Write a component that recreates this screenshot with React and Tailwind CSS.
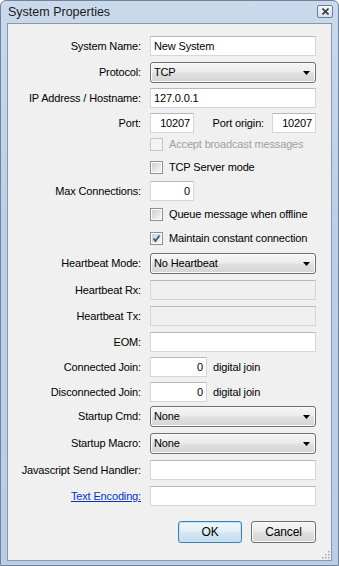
import React from "react";

const font = { fontFamily: '"Liberation Sans", Arial, sans-serif' };

function Label({ children, link }) {
  return (
    <div className="w-[133px] shrink-0 text-right">
      {link ? (
        <span className="text-[#0033cc] underline">{children}</span>
      ) : (
        children
      )}
    </div>
  );
}

function TextBox({ value = "", right, disabled, width }) {
  return (
    <div
      className={`h-[20px] border border-[#d3d6db] border-t-[#b6bac0] flex items-center px-[3px] ${
        disabled ? "bg-[#f0f0f0]" : "bg-white"
      } ${right ? "justify-end" : ""} ${width || "w-[166px]"}`}
    >
      {value}
    </div>
  );
}

function Combo({ value }) {
  return (
    <div className="w-[166px] h-[21px] rounded-[3px] border border-[#707070] bg-[linear-gradient(to_bottom,#f6f6f6_0%,#ececec_45%,#dfdfdf_55%,#d4d4d4_100%)] flex items-center justify-between pl-[3px] pr-[5px] shadow-[inset_0_0_0_1px_#fafafa]">
      <span>{value}</span>
      <svg width="7" height="4" viewBox="0 0 7 4">
        <path d="M0 0h7L3.5 4z" fill="#000" />
      </svg>
    </div>
  );
}

function Check({ checked, disabled }) {
  return (
    <div
      className={`w-[13px] h-[13px] border ${
        disabled ? "border-[#c6c6c6] bg-[#f4f4f4]" : "border-[#8e8f8f] bg-white"
      } p-[1px]`}
    >
      <div
        className={`w-full h-full flex items-center justify-center ${
          disabled
            ? "bg-[#f4f4f4]"
            : "bg-[linear-gradient(135deg,#cbcfd5_0%,#f6f6f6_100%)]"
        }`}
      >
        {checked && (
          <svg width="9" height="9" viewBox="0 0 9 9">
            <path d="M1.5 4.5l2 2.5 4-5.5" stroke="#3d5a8a" strokeWidth="1.8" fill="none" />
          </svg>
        )}
      </div>
    </div>
  );
}

function Row({ label, link, children, className = "" }) {
  return (
    <div className={`flex items-center gap-[9px] ${className}`}>
      <Label link={link}>{label}</Label>
      {children}
    </div>
  );
}

function CheckRow({ label, checked, disabled, className = "" }) {
  return (
    <div className={`flex items-center h-[13px] pl-[142px] ${className}`}>
      <Check checked={checked} disabled={disabled} />
      <span className={`ml-[6px] ${disabled ? "text-[#a0a0a0]" : ""}`}>{label}</span>
    </div>
  );
}

export default function App() {
  return (
    <div
      className="w-[339px] h-[566px] border border-[#6f849c] rounded-t-[6px] bg-[linear-gradient(to_bottom,#cad9ec_0%,#bccfe6_40%,#b9cde5_100%)] flex flex-col text-[11px] tracking-[-0.15px] text-black"
      style={font}
    >
      {/* Title bar */}
      <div className="h-[22px] flex items-center justify-between pl-[7px] pr-[5px]">
        <span className="text-[12.5px] tracking-normal text-[#1b1b1b]">System Properties</span>
        <div className="w-[16px] h-[13px] mt-[-1px] rounded-[2px] border border-[#6c7e94] bg-[linear-gradient(to_bottom,#f3f6fa,#d8e0ea)] flex items-center justify-center">
          <svg width="7" height="7" viewBox="0 0 7 7">
            <path d="M0.5 0.5l6 6M6.5 0.5l-6 6" stroke="#3a3a3a" strokeWidth="1.6" />
          </svg>
        </div>
      </div>

      {/* Client area */}
      <div className="flex-1 mx-[6px] mb-[4px] border border-[#8598ae] bg-[#f0f0f0] flex flex-col pt-[12px] relative">
        <Row label="System Name:">
          <TextBox value="New System" />
        </Row>
        <Row label="Protocol:" className="mt-[6px]">
          <Combo value="TCP" />
        </Row>
        <Row label="IP Address / Hostname:" className="mt-[5px]">
          <TextBox value="127.0.0.1" />
        </Row>
        <Row label="Port:" className="mt-[5px]">
          <div className="w-[166px] flex items-center">
            <TextBox value="10207" right width="w-[44px]" />
            <span className="flex-1 text-right pr-[8px]">Port origin:</span>
            <TextBox value="10207" right width="w-[44px]" />
          </div>
        </Row>
        <CheckRow label="Accept broadcast messages" disabled className="mt-[5px]" />
        <CheckRow label="TCP Server mode" className="mt-[10px]" />
        <Row label="Max Connections:" className="mt-[7px]">
          <TextBox value="0" right width="w-[44px]" />
        </Row>
        <CheckRow label="Queue message when offline" className="mt-[7px]" />
        <CheckRow label="Maintain constant connection" checked className="mt-[11px]" />
        <Row label="Heartbeat Mode:" className="mt-[8px]">
          <Combo value="No Heartbeat" />
        </Row>
        <Row label="Heartbeat Rx:" className="mt-[6px]">
          <TextBox disabled />
        </Row>
        <Row label="Heartbeat Tx:" className="mt-[6px]">
          <TextBox disabled />
        </Row>
        <Row label="EOM:" className="mt-[6px]">
          <TextBox />
        </Row>
        <Row label="Connected Join:" className="mt-[5px]">
          <TextBox value="0" right width="w-[57px]" />
          <span className="ml-[-3px]">digital join</span>
        </Row>
        <Row label="Disconnected Join:" className="mt-[5px]">
          <TextBox value="0" right width="w-[57px]" />
          <span className="ml-[-3px]">digital join</span>
        </Row>
        <Row label="Startup Cmd:" className="mt-[4px]">
          <Combo value="None" />
        </Row>
        <Row label="Startup Macro:" className="mt-[6px]">
          <Combo value="None" />
        </Row>
        <Row label="Javascript Send Handler:" className="mt-[6px]">
          <TextBox />
        </Row>
        <Row label="Text Encoding:" link className="mt-[6px]">
          <TextBox />
        </Row>

        <div className="flex justify-end gap-[9px] pr-[15px] mt-[15px]">
          <button className="w-[64px] h-[22px] rounded-[3px] border border-[#3c7fb1] bg-[linear-gradient(to_bottom,#f2f8fc_0%,#e3eff7_45%,#d3e6f3_55%,#c6ddee_100%)] shadow-[inset_0_0_0_1px_#bfe3f8] text-[12px]">
            OK
          </button>
          <button className="w-[65px] h-[22px] rounded-[3px] border border-[#707070] bg-[linear-gradient(to_bottom,#f6f6f6_0%,#ececec_45%,#dfdfdf_55%,#d4d4d4_100%)] shadow-[inset_0_0_0_1px_#fafafa] text-[12px]">
            Cancel
          </button>
        </div>

        {/* resize grip */}
        <svg className="absolute right-[1px] bottom-[1px]" width="10" height="10" viewBox="0 0 10 10">
          {[
            [8, 2], [8, 5], [5, 5], [8, 8], [5, 8], [2, 8],
          ].map(([x, y], i) => (
            <rect key={i} x={x} y={y} width="1.5" height="1.5" fill="#a6a6a6" />
          ))}
        </svg>
      </div>
    </div>
  );
}
